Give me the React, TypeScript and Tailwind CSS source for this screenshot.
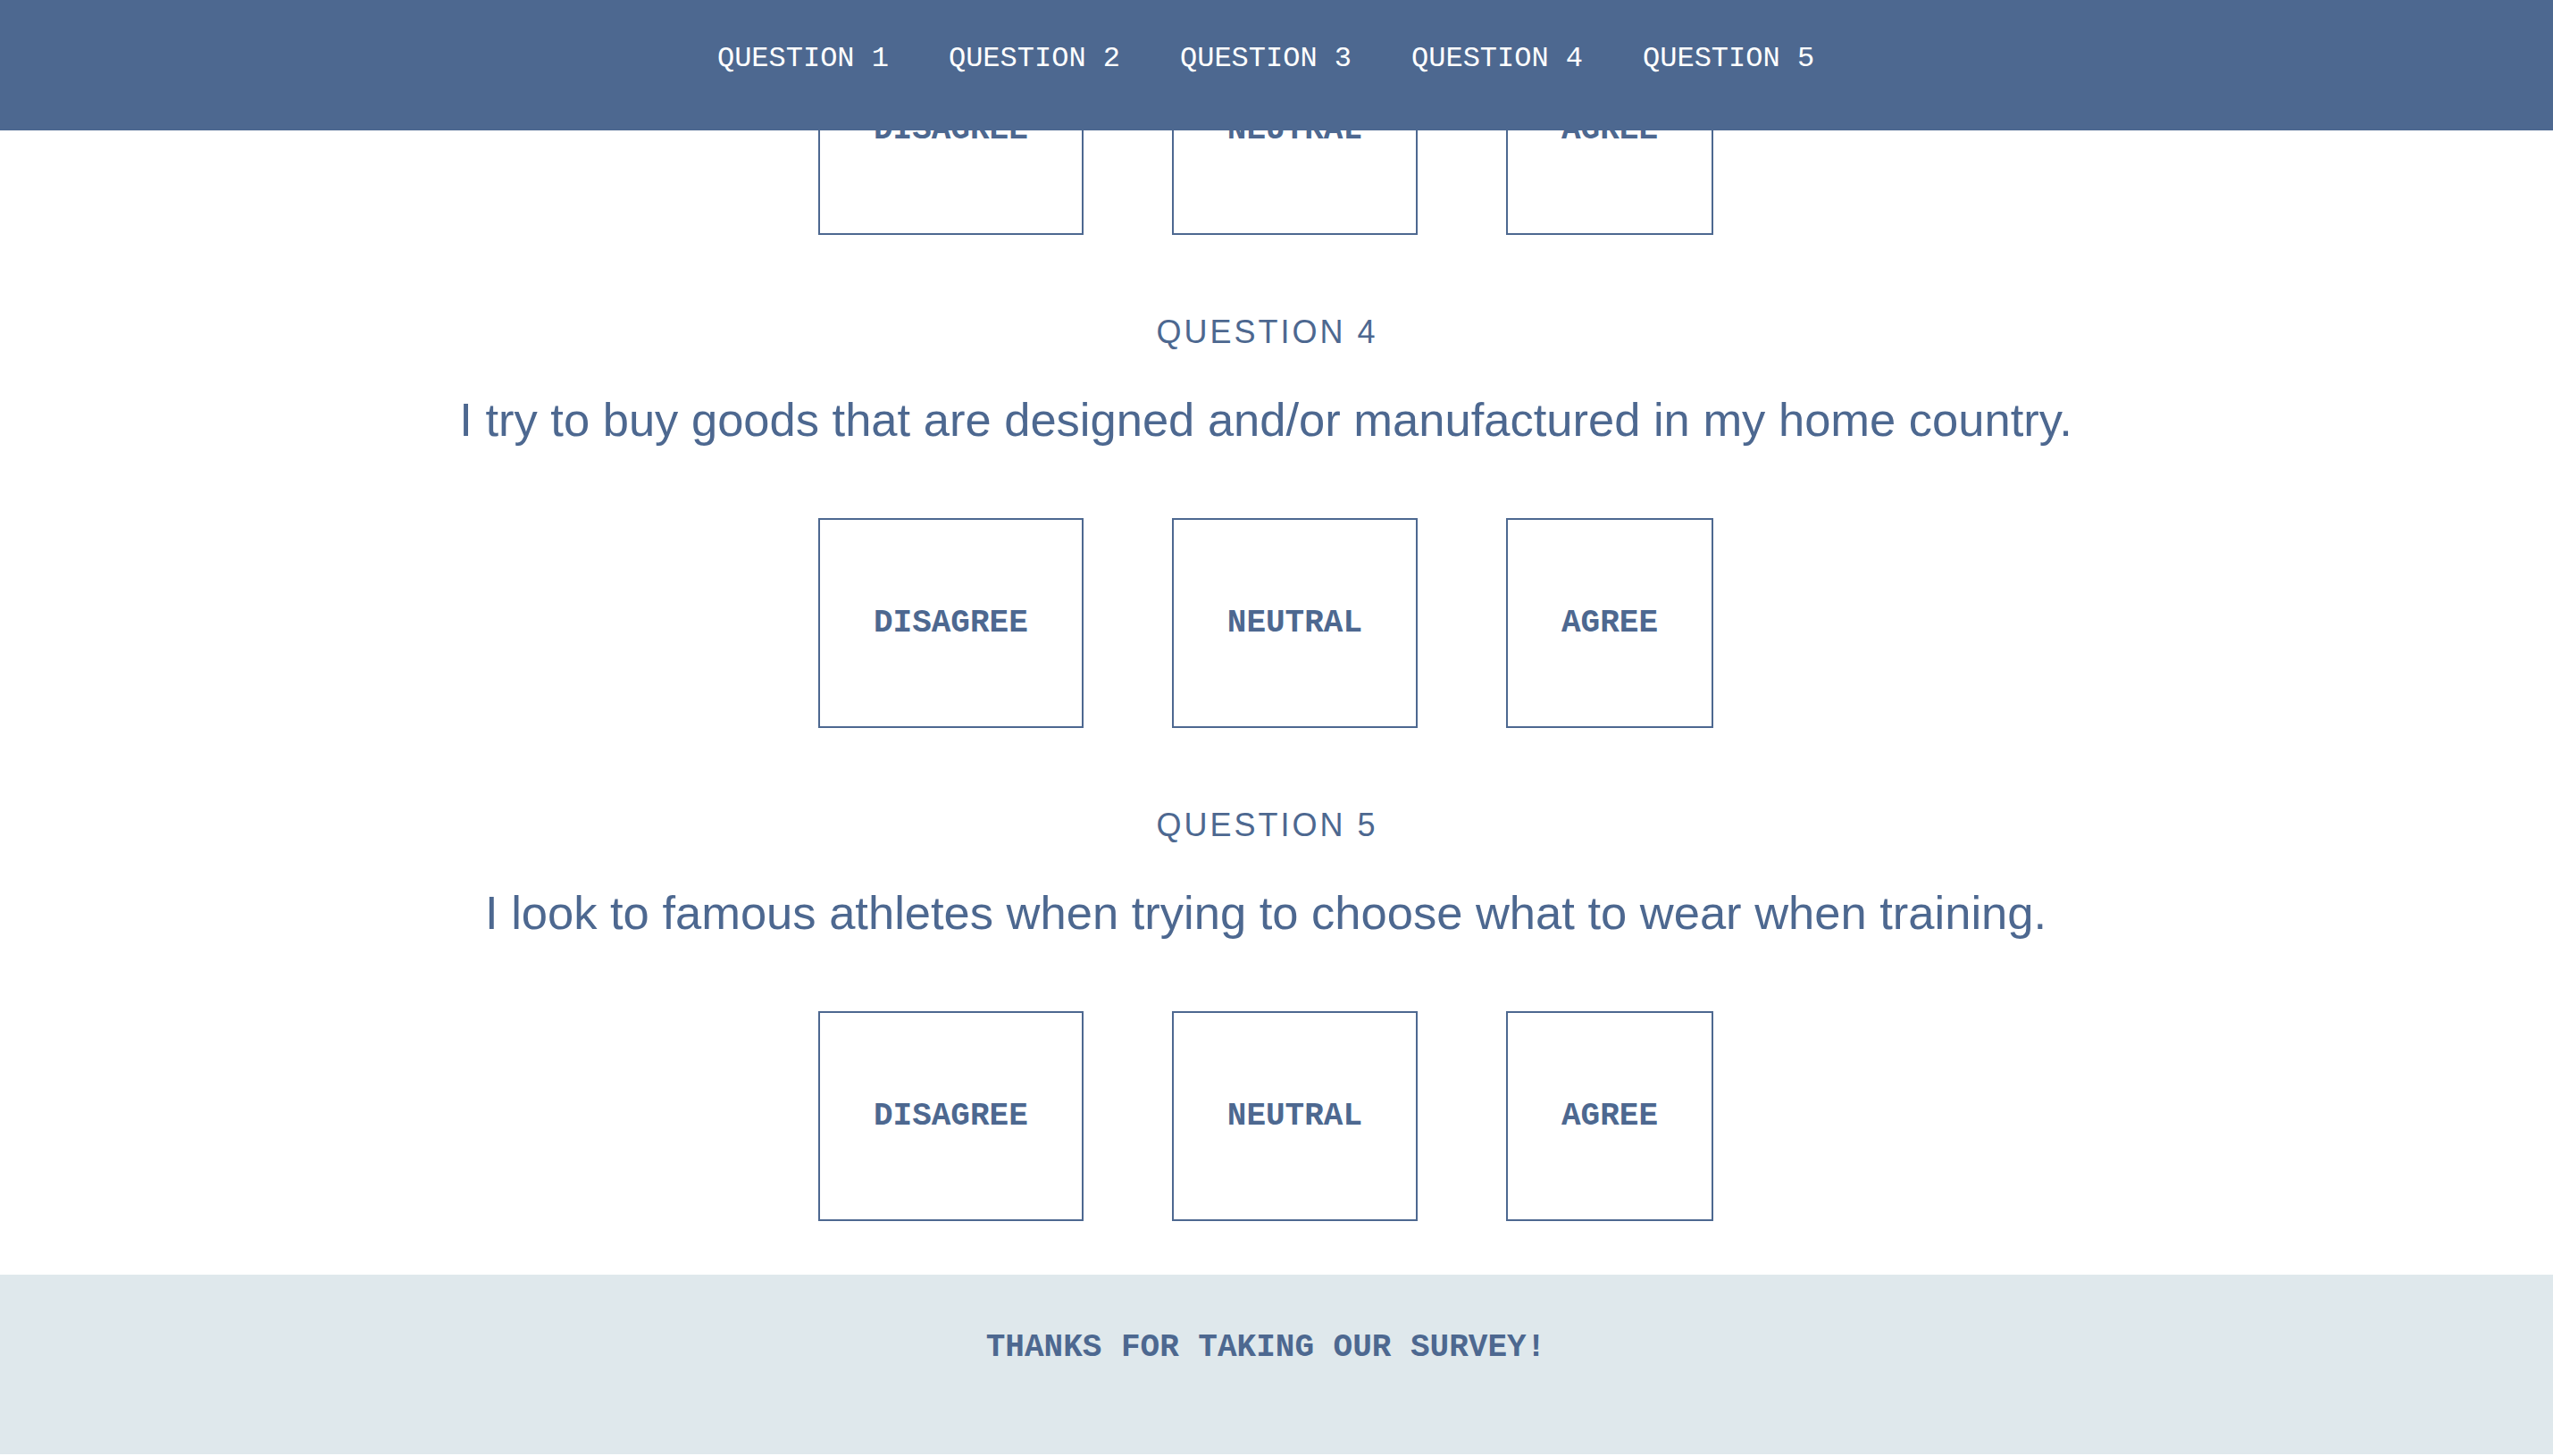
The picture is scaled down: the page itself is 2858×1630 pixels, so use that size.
import React from "react";

const mono = { fontFamily: '"Liberation Mono", "Courier New", monospace' };
const sans = { fontFamily: '"Liberation Sans", Helvetica, Arial, sans-serif' };

function Choices() {
  return (
    <div className="flex justify-center gap-[99px]" style={mono}>
      {["DISAGREE", "NEUTRAL", "AGREE"].map((c) => (
        <button
          key={c}
          className="h-[235px] px-[60px] pt-[1px] flex items-center justify-center border-2 border-[#4d6890] bg-white text-[36px] leading-none font-bold text-[#4d6890]"
        >
          {c}
        </button>
      ))}
    </div>
  );
}

function Question({ n, text }: { n: number; text: string }) {
  return (
    <section className="flex flex-col items-center mt-[91px]">
      <h2
        className="text-[36px] leading-[36px] tracking-[3px] font-normal text-[#4d6890] pl-[3px]"
        style={sans}
      >
        QUESTION {n}
      </h2>
      <p className="mt-[53px] text-[52.5px] leading-[53px] text-[#4d6890]" style={sans}>
        {text}
      </p>
      <div className="mt-[84px]">
        <Choices />
      </div>
    </section>
  );
}

export default function App() {
  return (
    <div className="min-h-screen bg-white">
      <header className="fixed top-0 left-0 right-0 z-10 h-[146px] bg-[#4d6890]">
        <nav
          className="flex justify-center gap-[67px] pt-[50px] pr-[24px] text-[32px] leading-[32px] text-white"
          style={mono}
        >
          {[1, 2, 3, 4, 5].map((i) => (
            <a key={i} href="#" className="text-white">
              QUESTION {i}
            </a>
          ))}
        </nav>
      </header>
      <main className="pr-[24px]">
        <div className="pt-[28px]">
          <Choices />
        </div>
        <Question
          n={4}
          text="I try to buy goods that are designed and/or manufactured in my home country."
        />
        <Question
          n={5}
          text="I look to famous athletes when trying to choose what to wear when training."
        />
      </main>
      <footer className="mt-[60px] h-[201px] bg-[#dfe8ec] pt-[64px] pr-[24px] flex justify-center">
        <p
          className="text-[36px] leading-[36px] font-bold text-[#4d6890]"
          style={mono}
        >
          THANKS FOR TAKING OUR SURVEY!
        </p>
      </footer>
    </div>
  );
}
